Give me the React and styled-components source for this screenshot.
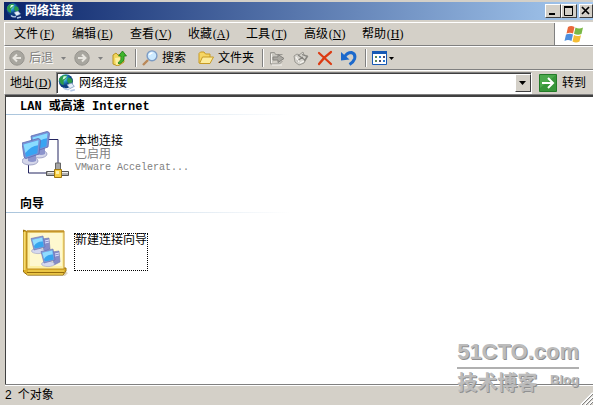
import React from 'react';
import styled, { createGlobalStyle } from 'styled-components';

const MENUS = [
  ['文件', 'F'],
  ['编辑', 'E'],
  ['查看', 'V'],
  ['收藏', 'A'],
  ['工具', 'T'],
  ['高级', 'N'],
  ['帮助', 'H'],
];

function App() {
  return (
    <Window>
      <GlobalStyle />
      <TitleBar>
        <GlobeIcon size={16} />
        <Title>网络连接</Title>
        <WindowButtons>
          <CaptionButton aria-label="最小化">
            <svg width="12" height="10">
              <path d="M2 8h6" stroke="#000" strokeWidth="2" />
            </svg>
          </CaptionButton>
          <CaptionButton aria-label="最大化">
            <svg width="12" height="10">
              <path d="M1.5 1v8.5h8V1M1 1h9" fill="none" stroke="#000" />
              <path d="M1 1h9" stroke="#000" strokeWidth="2" />
            </svg>
          </CaptionButton>
          <CaptionButton aria-label="关闭" $apart>
            <svg width="10" height="10">
              <path d="M1 1l7 7M8 1l-7 7" stroke="#000" strokeWidth="1.7" />
            </svg>
          </CaptionButton>
        </WindowButtons>
      </TitleBar>

      <MenuBar>
        {MENUS.map(([label, hotkey]) => (
          <MenuButton key={hotkey}>
            {label}
            <Hotkey letter={hotkey} />
          </MenuButton>
        ))}
        <FlagBox>
          <FlagIcon />
        </FlagBox>
      </MenuBar>

      <Toolbar>
        <ToolButton disabled>
          <RoundArrow back />
          后退
        </ToolButton>
        <DropButton disabled aria-label="后退列表">
          <Caret />
        </DropButton>
        <ToolButton disabled aria-label="前进">
          <RoundArrow />
        </ToolButton>
        <DropButton disabled aria-label="前进列表">
          <Caret />
        </DropButton>
        <ToolButton aria-label="向上">
          <UpIcon />
        </ToolButton>
        <Separator />
        <ToolButton>
          <SearchIcon />
          搜索
        </ToolButton>
        <ToolButton $wide>
          <FolderIcon />
          文件夹
        </ToolButton>
        <Separator />
        <ToolButton disabled aria-label="移至">
          <MoveIcon />
        </ToolButton>
        <ToolButton disabled aria-label="复制到">
          <CopyIcon />
        </ToolButton>
        <ToolButton aria-label="删除">
          <svg width="16" height="16">
            <path
              d="M2 3l12 11M14 2Q7 7 2 14"
              fill="none"
              stroke="#dc3a12"
              strokeWidth="2.2"
              strokeLinecap="round"
            />
          </svg>
        </ToolButton>
        <ToolButton aria-label="撤消">
          <UndoIcon />
        </ToolButton>
        <Separator />
        <ViewButton aria-label="查看">
          <ViewsIcon />
          <Caret />
        </ViewButton>
      </Toolbar>

      <AddressBar>
        <AddressLabel htmlFor="address">
          地址
          <Hotkey letter="D" />
        </AddressLabel>
        <Combo>
          <GlobeIcon size={18} />
          <AddressSelect id="address">
            <option>网络连接</option>
          </AddressSelect>
          <ComboArrow>
            <Caret big />
          </ComboArrow>
        </Combo>
        <GoButton>
          <GoIcon />
          转到
        </GoButton>
      </AddressBar>

      <Content>
        <Heading>
          <BoldLatin>LAN </BoldLatin>或高速<BoldLatin> Internet</BoldLatin>
        </Heading>
        <Item>
          <LanIcon />
          <ItemText>
            <Name>本地连接</Name>
            <Detail>已启用</Detail>
            <Detail>
              <Latin>VMware Accelerat...</Latin>
            </Detail>
          </ItemText>
        </Item>
        <Heading>向导</Heading>
        <Item>
          <WizardIcon />
          <FocusBox>新建连接向导</FocusBox>
        </Item>
      </Content>

      <StatusBar>
        <Count>2</Count>个对象
        <Grip width="14" height="14">
          <path d="M2 14L14 2M6 14l8-8M10 14l4-4" stroke="#fff" strokeWidth="2" />
          <path d="M3 14L14 3M7 14l7-7M11 14l3-3" stroke="#808080" />
        </Grip>
      </StatusBar>

      <Watermark>
        <WatermarkSite>51CTO.com</WatermarkSite>
        <WatermarkRow>
          <WatermarkName>技术博客</WatermarkName>
          <WatermarkBlog>Blog</WatermarkBlog>
        </WatermarkRow>
      </Watermark>
    </Window>
  );
}

function Hotkey({ letter }) {
  return (
    <HotkeyText>
      (<u>{letter}</u>)
    </HotkeyText>
  );
}

function Caret({ big }) {
  return big ? (
    <svg width="7" height="4">
      <path d="M0 0h7L3.5 4z" fill="#000" />
    </svg>
  ) : (
    <svg width="5" height="3">
      <path d="M0 0h5L2.5 3z" fill="currentColor" />
    </svg>
  );
}

function GlobeIcon({ size }) {
  return (
    <svg width={size} height={size} viewBox="0 0 16 16">
      <defs>
        <radialGradient id="globe" cx="35%" cy="30%">
          <stop offset="0" stopColor="#9ff0e0" />
          <stop offset=".5" stopColor="#2590c8" />
          <stop offset="1" stopColor="#0c3d80" />
        </radialGradient>
      </defs>
      <circle cx="7" cy="6.5" r="6.3" fill="url(#globe)" />
      <path d="M1 4Q4 0 8 1L7 4 5 6 5 10Q2 9 1 6zM9 3l3 1 1 3-3 2-2-3z" fill="#2c9a48" />
      <path d="M5 2l3 0-2 2-2 1z" fill="#d6ffe0" />
      <path d="M8 9.500l4-1.500 2.500 3-4 2z" fill="#e4edf8" stroke="#6f8cb4" strokeWidth=".6" />
      <path d="M5 12.500q2 2 5 1M11 15l4-1" fill="none" stroke="#b4c8e8" strokeWidth="1.400" />
    </svg>
  );
}

function FlagIcon() {
  return (
    <svg width="20" height="18" viewBox="0 0 20 18">
      <path d="M4 2Q7 0 10.5 2L9 8.5Q6 7 2.5 8.5z" fill="#e9683a" />
      <path d="M11.5 2.5Q15 4.500 19 2.500L17.500 9Q14 10.500 10 8.800z" fill="#79b845" />
      <path d="M2 9.500Q6 8 9 9.500L7.500 16Q4 14 .5 16z" fill="#4e8fde" />
      <path d="M10 10Q13 12 17 10.200L15.500 16.500Q12 18.500 8.500 16.500z" fill="#f4bd35" />
    </svg>
  );
}

function RoundArrow({ back }) {
  return (
    <svg width="16" height="16">
      <circle cx="8" cy="8" r="7.200" fill="#a8a69f" stroke="#96948e" />
      <path
        d={back ? 'M12 8H5M8 4.500L4.500 8 8 11.500' : 'M4 8h7M8 4.500L11.500 8 8 11.500'}
        fill="none"
        stroke="#e8e6e0"
        strokeWidth="2"
      />
    </svg>
  );
}

function UpIcon() {
  return (
    <svg width="16" height="16">
      <path d="M2 5l3-2 2 2 5-1 1 8-6 4-5-2z" fill="#f2d65c" stroke="#b99422" />
      <path d="M4 8l8-1-3 7-4 1z" fill="#fdf0a0" />
      <path
        d="M7 13Q11 10 10 6H7.500L11.500 1l4 5h-2.500Q14 12 8 14z"
        fill="#3fb52c"
        stroke="#1c7814"
        strokeWidth=".8"
      />
    </svg>
  );
}

function SearchIcon() {
  return (
    <svg width="16" height="16">
      <path d="M1 15L6 10" stroke="#b98858" strokeWidth="2.400" />
      <circle cx="10" cy="5.800" r="4.900" fill="#cceaff" stroke="#7d9cc4" strokeWidth="1.400" />
      <path d="M7.500 5Q8 3 10.500 3" fill="none" stroke="#fff" strokeWidth="1.500" />
    </svg>
  );
}

function FolderIcon() {
  return (
    <svg width="16" height="16">
      <path d="M1 13V3.500L2.500 2H6l1.500 2H12v3" fill="#f6d664" stroke="#c79a25" />
      <path d="M1.500 13.500L4.500 7h11l-3.500 6.500z" fill="#fdec9c" stroke="#c79a25" />
    </svg>
  );
}

function MoveIcon() {
  return (
    <svg width="16" height="16">
      <path d="M1.500 14V2.500h4l1 2h7M1.500 14h9l3-3" fill="#c8c6bf" stroke="#9a9892" />
      <path d="M4 7h5V4.500L15 8.500 9 12.500V10H4z" fill="#aaa8a2" stroke="#85837e" />
      <path d="M3 15h10M2.500 4v9" stroke="#f4f2ee" />
    </svg>
  );
}

function CopyIcon() {
  return (
    <svg width="16" height="16">
      <path d="M1 6l3-2 2 1 4-3 1 3 4 1-4 7-5 2-4-3z" fill="#d6d4ce" stroke="#9a9892" />
      <path d="M5 5l7 5M4 11l6-4M9 4.500l5 2-3 5" fill="none" stroke="#85837e" strokeWidth="1.300" />
      <path d="M3 7l3 5M7 13l4-2" stroke="#f8f6f2" strokeWidth="1.300" />
    </svg>
  );
}

function UndoIcon() {
  return (
    <svg width="16" height="16">
      <path d="M0 2v8.500l8.500-1z" fill="#1c69cc" />
      <path
        d="M3.500 7Q6 2.500 10.500 2.500 15 4 13.500 9 12.500 12 8.500 14.500"
        fill="none"
        stroke="#1c69cc"
        strokeWidth="3"
      />
    </svg>
  );
}

function ViewsIcon() {
  return (
    <svg width="16" height="14">
      <path d="M.5.5h14v13H.5z" fill="#fff" stroke="#1759b5" />
      <path d="M0 1.500h15" stroke="#1759b5" strokeWidth="3" />
      <path d="M3 6h2M3 10h2" stroke="#608858" strokeWidth="2" />
      <path d="M7 6h2M11 10h2" stroke="#2979cf" strokeWidth="2" />
      <path d="M11 6h2M7 10h2" stroke="#4e4970" strokeWidth="2" />
    </svg>
  );
}

function GoIcon() {
  return (
    <svg width="18" height="18">
      <path d="M.5.5h17v17H.5z" fill="#38963a" stroke="#237b28" />
      <path d="M1 1h16L1 14z" fill="#5ab65a" opacity=".6" />
      <path d="M3 9h11M9 4l5 5-5 5" fill="none" stroke="#fff" strokeWidth="2" />
    </svg>
  );
}

function Screen() {
  return (
    <>
      <ellipse cx="8" cy="23" rx="8" ry="4" fill="#d4d6ea" stroke="#9094bc" strokeWidth=".8" />
      <path d="M6 17h8v6q-4 2-8 0z" fill="#8c94cc" />
      <path d="M0 5L16 .5q2 0 2.500 2L17 16 4 20.500q-1.500 0-2-2z" fill="#7d92d4" stroke="#5c6cb4" strokeWidth=".8" />
      <path d="M1.500 6.500l15-4.300-1.200 13L4 19z" fill="#38a4f2" />
      <path d="M1.500 6.500l15-4.300-.5 5Q9 8 3.300 15z" fill="#8adcff" />
    </>
  );
}

function LanIcon() {
  return (
    <svg width="48" height="48">
      <path d="M26 8.500h10V36M6.500 34v8H26" fill="none" stroke="#252660" />
      <g transform="translate(9 0)">
        <Screen />
      </g>
      <g transform="translate(0 7)">
        <Screen />
      </g>
      <path d="M33.500 32h5v9h-5z" fill="#a5a5a5" stroke="#666" />
      <path d="M24.500 40.500h22v4h-22z" fill="#b0b0b0" stroke="#555" />
      <path d="M26 41.500h20" stroke="#eee" />
      <path d="M32.500 38.500h7v8h-7z" fill="#f7cf46" stroke="#a2780d" />
      <path d="M34 40h3v3h-3z" fill="#fff1a8" />
    </svg>
  );
}

function MiniComputer() {
  return (
    <>
      <path d="M11 3l7-1 1 11-6 3z" fill="#858cc8" stroke="#6f75b0" strokeWidth=".6" />
      <path d="M14 5l4-1M14 7l4-1" stroke="#dfe3ff" />
      <ellipse cx="7" cy="15" rx="6.500" ry="2.600" fill="#d5d8ee" stroke="#9ba0c8" strokeWidth=".6" />
      <path d="M0 2.500L12 0l2 11-11 3z" fill="#8c9cd8" stroke="#5f6fb4" strokeWidth=".6" />
      <path d="M1.300 3.800l10-2.300 1.500 9-9 2z" fill="#37a5ee" />
      <path d="M1.300 3.800l10-2.300.5 4Q6 5 3 10z" fill="#90dcff" />
    </>
  );
}

function WizardIcon() {
  return (
    <svg width="48" height="48">
      <path d="M4 42l37-1 5 3-3 3H6z" fill="#8d7430" opacity=".3" />
      <path d="M5 2.500L1.500 1v42l4 3H41l3-4V39H5z" fill="#dcae28" stroke="#9c7410" />
      <path d="M2.500 3v38" stroke="#f7dc71" strokeWidth="2" />
      <path d="M5 2h37v38H5z" fill="#fdf0a5" stroke="#c19120" />
      <path d="M8 4h32v33H8z" fill="#fef8cf" />
      <path d="M5 2.500h37" stroke="#c4942a" strokeWidth="2" />
      <path d="M6 42h36M5 45h36" stroke="#f8dd64" />
      <path d="M5 43.500h37" stroke="#946b0c" />
      <g transform="translate(9 7)">
        <MiniComputer />
      </g>
      <g transform="translate(19 20)">
        <MiniComputer />
      </g>
    </svg>
  );
}

const GlobalStyle = createGlobalStyle`
  * {
    box-sizing: border-box;
  }
  body {
    margin: 0;
    background: #d4d0c8;
  }
  body, button, select {
    font-family: 'Liberation Sans', 'Noto Sans CJK SC', sans-serif;
    font-size: 12px;
    line-height: 12px;
    color: #000;
  }
  button {
    display: flex;
    align-items: center;
    padding: 0;
    border: 0;
    background: none;
    white-space: nowrap;
  }
  svg {
    display: block;
    flex: none;
  }
`;

const Window = styled.div`
  position: relative;
  display: flex;
  flex-direction: column;
  min-height: 100vh;
  padding: 2px 0 0 4px;
  overflow: hidden;
`;

const Latin = styled.span`
  font-family: 'Liberation Mono', monospace;
  font-size: 10px;
  white-space: pre;
`;

const BoldLatin = styled(Latin)`
  font-size: 12px;
`;

const HotkeyText = styled.span`
  display: inline-block;
  width: 18px;
  font-family: 'Liberation Serif', serif;
  text-align: center;
`;

const TitleBar = styled.div`
  display: flex;
  align-items: center;
  height: 18px;
  margin-bottom: 2px;
  padding-left: 2px;
  background: linear-gradient(to right, #0a246a, #a6caf0);
`;

const Title = styled.div`
  flex: 1;
  margin-left: 3px;
  font-weight: bold;
  color: #fff;
`;

const WindowButtons = styled.div`
  display: flex;
`;

const CaptionButton = styled.button`
  justify-content: center;
  width: ${({ $apart }) => ($apart ? '14px' : '16px')};
  height: 14px;
  margin-left: ${({ $apart }) => ($apart ? '2px' : '0')};
  background: #d4d0c8;
  border: 1px solid;
  border-color: #fff #404040 #404040 #fff;
`;

const Bar = styled.div`
  display: flex;
  align-items: center;
  height: 24px;
  border: 1px solid;
  border-color: #fff transparent #808080 #fff;
  border-right: 0;
`;

const MenuBar = styled(Bar)`
  padding-left: 1px;
`;

const MenuButton = styled.button`
  height: 20px;
  padding: 0 8px;
`;

const FlagBox = styled.div`
  display: flex;
  justify-content: center;
  align-items: center;
  align-self: stretch;
  width: 39px;
  margin-left: auto;
  background: #fff;
  border-left: 1px solid #808080;
`;

const Toolbar = styled(Bar)`
  padding-left: 4px;
`;

const ToolButton = styled.button`
  gap: 4px;
  height: 22px;
  margin-right: 8px;
  padding-left: ${({ $wide }) => ($wide ? '4px' : '0')};
  color: ${({ disabled }) => (disabled ? '#808080' : '#000')};
  text-shadow: ${({ disabled }) => (disabled ? '1px 1px #fff' : 'none')};
`;

const DropButton = styled.button`
  height: 22px;
  margin-right: 8px;
  color: #808080;
`;

const ViewButton = styled.button`
  height: 22px;
  gap: 1px;
`;

const Separator = styled.div`
  width: 2px;
  height: 18px;
  margin-right: 5px;
  border-left: 1px solid #808080;
  border-right: 1px solid #fff;
`;

const AddressBar = styled(Bar)`
  height: 25px;
  padding-left: 5px;
`;

const AddressLabel = styled.label`
  width: 46px;
  white-space: nowrap;
`;

const Combo = styled.div`
  display: flex;
  flex: 1;
  align-items: center;
  height: 22px;
  padding-left: 1px;
  background: #fff;
  border: 1px solid;
  border-color: #808080 #fff #fff #808080;
  box-shadow: inset 1px 1px #404040;
`;

const AddressSelect = styled.select`
  flex: 1;
  min-width: 0;
  height: 18px;
  margin-left: 3px;
  padding: 0;
  border: 0;
  background: none;
  appearance: none;
`;

const ComboArrow = styled.div`
  display: flex;
  align-items: center;
  justify-content: center;
  width: 16px;
  height: 18px;
  background: #d4d0c8;
  border: 1px solid;
  border-color: #fff #404040 #404040 #fff;
  pointer-events: none;
`;

const GoButton = styled.button`
  gap: 5px;
  margin: 0 7px;
`;

const Content = styled.main`
  flex: 1;
  margin-left: 1px;
  background: #fff;
  border-top: 2px solid #404040;
  border-left: 1px solid #404040;
`;

const Heading = styled.h2`
  width: 284px;
  height: 18px;
  margin: 0;
  padding: 2px 0 0 14px;
  font-size: 12px;
  line-height: 14px;
  font-weight: bold;
  border-bottom: 1px solid;
  border-image: linear-gradient(to right, #a9c4dc, #fff) 1;
`;

const Item = styled.div`
  display: flex;
  gap: 4px;
  height: 80px;
  padding: 16px 0 0 16px;
`;

const ItemText = styled.div`
  padding: 4px 0 0 1px;
`;

const Name = styled.div`
  line-height: 13px;
`;

const Detail = styled.div`
  color: #808080;
`;

const FocusBox = styled.div`
  width: 74px;
  height: 38px;
  margin-top: 4px;
  border: 1px dotted #000;
`;

const StatusBar = styled.footer`
  display: flex;
  align-items: center;
  height: 21px;
  margin-left: 1px;
  border-top: 1px solid #808080;
  box-shadow: inset 0 1px #fff;
`;

const Count = styled.span`
  margin-right: 6px;
`;

const Grip = styled.svg`
  align-self: flex-end;
  margin-left: auto;
`;

const Watermark = styled.div`
  position: absolute;
  right: 14px;
  bottom: 12px;
  color: #bcbcbc;
  font-weight: bold;
  text-shadow: 1px 1px #909090;
  pointer-events: none;
`;

const WatermarkSite = styled.div`
  padding-bottom: 3px;
  font-size: 22px;
  line-height: 24px;
  border-bottom: 2px solid #b0b0b0;
`;

const WatermarkRow = styled.div`
  display: flex;
  justify-content: space-between;
  padding-top: 4px;
`;

const WatermarkName = styled.span`
  font-size: 20px;
  line-height: 20px;
`;

const WatermarkBlog = styled.span`
  font-size: 13px;
  line-height: 14px;
`;

export default App;
